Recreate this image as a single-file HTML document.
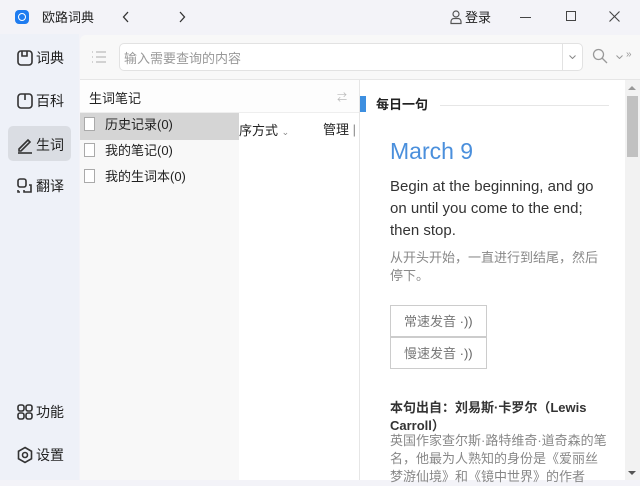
<!DOCTYPE html>
<html><head><meta charset="utf-8"><style>
*{margin:0;padding:0;box-sizing:border-box}
body{width:640px;height:480px;overflow:hidden;position:relative;background:#f3f3f8;font-family:"Liberation Sans","Noto Sans CJK SC",sans-serif;color:#222}
.a{position:absolute}
.side{left:0;top:34px;width:79px;height:446px;background:#eef1f8}
.nav{position:absolute;left:16px;font-size:14px;color:#222;display:flex;align-items:center;gap:2px}
.t13{font-size:13px}
</style></head><body>
<div class="a" style="left:15px;top:10px;width:14px;height:14px;background:#1e7cf0;border-radius:4px"><div class="a" style="left:3px;top:3px;width:8px;height:8px;border:1.5px solid #fff;border-radius:50%"></div></div>
<div class="a t13" style="left:42px;top:7px">欧路词典</div>
<svg class="a" style="left:122px;top:11px" width="8" height="12" viewBox="0 0 8 12" fill="none" stroke="#333" stroke-width="1.3"><path d="M6 1L1.5 6 6 11"/></svg>
<svg class="a" style="left:178px;top:11px" width="8" height="12" viewBox="0 0 8 12" fill="none" stroke="#333" stroke-width="1.3"><path d="M2 1l4.5 5L2 11"/></svg>
<svg class="a" style="left:449px;top:9px" width="14" height="16" viewBox="0 0 14 16" fill="none" stroke="#555" stroke-width="1.2"><circle cx="7" cy="5" r="3"/><path d="M2 14.5v-2a3 3 0 0 1 3-3h4a3 3 0 0 1 3 3v2z"/></svg>
<div class="a t13" style="left:465px;top:7px">登录</div>
<div class="a" style="left:520px;top:17px;width:11px;height:1px;background:#444"></div>
<div class="a" style="left:566px;top:11px;width:10px;height:10px;border:1px solid #444"></div>
<svg class="a" style="left:609px;top:11px" width="11" height="11" viewBox="0 0 11 11" stroke="#444" stroke-width="1.1"><path d="M0.5 0.5l10 10M10.5 0.5l-10 10"/></svg>
<div class="a side"></div>
<div class="a" style="left:8px;top:126px;width:63px;height:35px;background:#dadde3;border-radius:5px"></div>
<div class="nav" style="top:48px"><svg width="18" height="18" viewBox="0 0 18 18" fill="none" stroke="#333" stroke-width="1.6"><rect x="2" y="2" width="14" height="14" rx="3"/><path d="M6 2v5h5V2"/></svg>词典</div>
<div class="nav" style="top:91px"><svg width="18" height="18" viewBox="0 0 18 18" fill="none" stroke="#333" stroke-width="1.6"><rect x="2" y="2" width="14" height="14" rx="3"/><path d="M9 2v6"/></svg>百科</div>
<div class="nav" style="top:135px"><svg width="18" height="18" viewBox="0 0 18 18" fill="none" stroke="#333" stroke-width="1.6"><path d="M3 13l9-9 2 2-9 9H3z"/><path d="M2 17h14"/></svg>生词</div>
<div class="nav" style="top:176px"><svg width="18" height="18" viewBox="0 0 18 18" fill="none" stroke="#333" stroke-width="1.6"><rect x="2" y="2" width="8" height="8" rx="2"/><path d="M13 8h2v7h-7v-2M2 13v2h2"/></svg>翻译</div>
<div class="nav" style="top:402px"><svg width="18" height="18" viewBox="0 0 18 18" fill="none" stroke="#333" stroke-width="1.6"><rect x="2" y="2" width="6" height="6" rx="2"/><rect x="10" y="2" width="6" height="6" rx="2"/><rect x="2" y="10" width="6" height="6" rx="2"/><rect x="10" y="10" width="6" height="6" rx="2"/></svg>功能</div>
<div class="nav" style="top:445px"><svg width="18" height="18" viewBox="0 0 18 18" fill="none" stroke="#333" stroke-width="1.6"><path d="M9 1.5l6.5 3.75v7.5L9 16.5 2.5 12.75v-7.5z"/><circle cx="9" cy="9" r="2.5"/></svg>设置</div>
<div class="a" style="left:80px;top:35px;width:560px;height:45px;background:#f8f8f8;border-top-left-radius:6px;border-bottom:1px solid #e6e6e6"></div>
<svg class="a" style="left:91px;top:50px" width="16" height="14" viewBox="0 0 16 14" stroke="#bbb" stroke-width="1.2"><path d="M1 2h1M1 7h1M1 12h1M5 2h10M5 7h10M5 12h10"/></svg>
<div class="a" style="left:119px;top:43px;width:464px;height:28px;background:#fff;border:1px solid #e2e2e2;border-radius:5px"></div>
<div class="a t13" style="left:124px;top:48px;color:#999">输入需要查询的内容</div>
<div class="a" style="left:562px;top:44px;width:1px;height:26px;background:#e2e2e2"></div>
<svg class="a" style="left:569px;top:55px" width="7" height="4" viewBox="0 0 7 4" fill="none" stroke="#888"><path d="M0.5 0.5l3 3 3-3"/></svg>
<svg class="a" style="left:592px;top:48px" width="16" height="16" viewBox="0 0 16 16" fill="none" stroke="#999" stroke-width="1.3"><circle cx="6.5" cy="6.5" r="5"/><path d="M10 10l5 5"/></svg>
<svg class="a" style="left:616px;top:55px" width="7" height="4" viewBox="0 0 7 4" fill="none" stroke="#999"><path d="M0.5 0.5l3 3 3-3"/></svg>
<div class="a" style="left:626px;top:49px;font-size:10px;color:#999">»</div>
<div class="a" style="left:80px;top:80px;width:280px;height:400px;background:#fff;border-right:1px solid #e6e6e6"></div>
<div class="a" style="left:80px;top:80px;width:279px;height:33px;background:#fdfdfd;border-bottom:1px solid #eee"></div>
<div class="a t13" style="left:89px;top:88px">生词笔记</div>
<div class="a" style="left:337px;top:89px;font-size:10px;color:#bbb">⇄</div>
<div class="a t13" style="left:239px;top:120px">序方式 <span style="font-size:9px;color:#888">&#8964;</span></div>
<div class="a t13" style="left:323px;top:119px">管理 <span style="color:#888">|</span></div>
<div class="a" style="left:80px;top:113px;width:159px;height:367px;background:#f8f8f8"></div>
<div class="a" style="left:80px;top:113px;width:159px;height:27px;background:#d5d5d5"></div>
<div class="a t13" style="left:84px;top:118px;line-height:26px">
<div style="position:relative;top:-6px"><span style="display:inline-block;width:11px;height:14px;border:1px solid #aaa;vertical-align:-2px;margin-right:10px;background:#fff"></span>历史记录(0)</div>
<div style="position:relative;top:-6px"><span style="display:inline-block;width:11px;height:14px;border:1px solid #aaa;vertical-align:-2px;margin-right:10px;background:#fff"></span>我的笔记(0)</div>
<div style="position:relative;top:-6px"><span style="display:inline-block;width:11px;height:14px;border:1px solid #aaa;vertical-align:-2px;margin-right:10px;background:#fff"></span>我的生词本(0)</div>
</div>
<div class="a" style="left:360px;top:80px;width:265px;height:400px;background:#fff"></div>
<div class="a" style="left:360px;top:96px;width:6px;height:16px;background:#3d8fe0"></div>
<div class="a t13" style="left:376px;top:94px;font-weight:bold">每日一句</div>
<div class="a" style="left:440px;top:105px;width:169px;height:1px;background:#e6e6e6"></div>
<div class="a" style="left:390px;top:138px;font-size:23px;color:#4a8fdc">March 9</div>
<div class="a" style="left:390px;top:176px;width:220px;font-size:15px;line-height:22px;color:#333">Begin at the beginning, and go on until you come to the end; then stop.</div>
<div class="a t13" style="left:390px;top:249px;width:215px;line-height:18px;color:#888">从开头开始，一直进行到结尾，然后停下。</div>
<div class="a t13" style="left:390px;top:305px;width:97px;height:32px;border:1px solid #ccc;color:#777;padding:5px 0 0 13px">常速发音 <span style="color:#666">·))</span></div>
<div class="a t13" style="left:390px;top:337px;width:97px;height:32px;border:1px solid #ccc;color:#777;padding:5px 0 0 13px">慢速发音 <span style="color:#666">·))</span></div>
<div class="a t13" style="left:390px;top:399px;width:220px;line-height:18px;font-weight:bold;color:#333">本句出自：刘易斯·卡罗尔（Lewis Carroll）</div>
<div class="a t13" style="left:390px;top:432px;width:240px;line-height:18px;color:#888;white-space:nowrap">英国作家查尔斯·路特维奇·道奇森的笔<br>名，他最为人熟知的身份是《爱丽丝<br>梦游仙境》和《镜中世界》的作者</div>
<div class="a" style="left:625px;top:80px;width:15px;height:400px;background:#f2f2f2"></div>
<div class="a" style="left:627px;top:96px;width:11px;height:61px;background:#c1c1c1"></div>
<div class="a" style="left:628px;top:86px;border:4px solid transparent;border-bottom:4px solid #999;border-top:0"></div>
<div class="a" style="left:628px;top:471px;border:4px solid transparent;border-top:4px solid #555;border-bottom:0"></div>
</body></html>
